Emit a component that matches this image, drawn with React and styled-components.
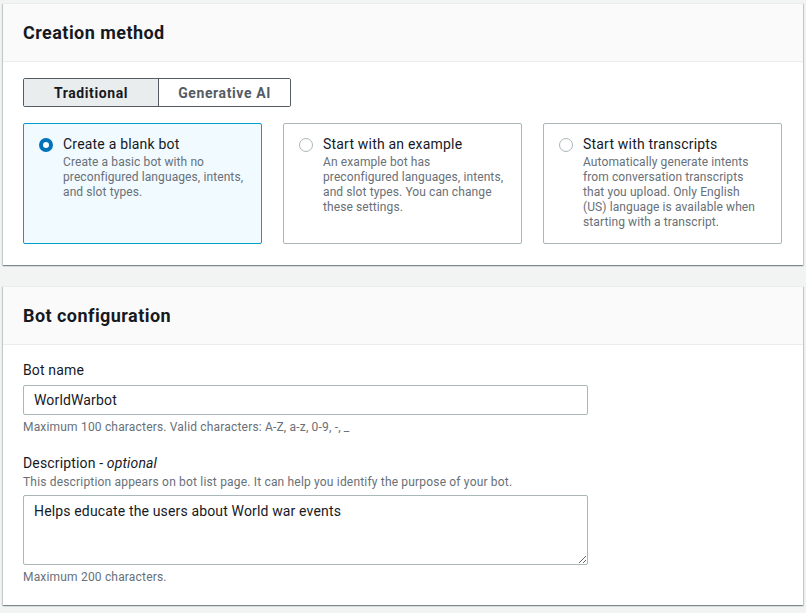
import React, { useState } from "react";
import styled, { createGlobalStyle } from "styled-components";

const GlobalStyle = createGlobalStyle`
  * { box-sizing: border-box; }
  body {
    margin: 0;
    background: #f2f3f3;
    font-family: Roboto, "Liberation Sans", sans-serif;
    color: #16191f;
  }
`;

const Page = styled.div`
  padding: 3px 3px 8px 3px;
  display: flex;
  flex-direction: column;
  gap: 21px;
`;

const Card = styled.section`
  background: #ffffff;
  border-top: 1px solid #eaeded;
  box-shadow: 0 1px 1px 0 rgba(0, 28, 36, 0.3), 1px 1px 1px 0 rgba(0, 28, 36, 0.15),
    -1px 1px 1px 0 rgba(0, 28, 36, 0.15);
`;

const CardHeader = styled.header`
  height: 58px;
  display: flex;
  align-items: center;
  padding: 0 20px;
  background: #fafafa;
  border-bottom: 1px solid #eaeded;
  h2 {
    margin: 0;
    font-size: 18px;
    font-weight: 700;
    line-height: 22px;
    letter-spacing: 0.45px;
  }
`;

const CardBody = styled.div`
  padding: ${(p) => p.$pad || "16px 20px 21px"};
`;

const Segmented = styled.div`
  display: inline-flex;
  border: 1px solid #545b64;
  border-radius: 2px;
  overflow: hidden;
`;

const Segment = styled.button`
  width: ${(p) => p.$w}px;
  height: 27px;
  border: none;
  border-left: ${(p) => (p.$first ? "none" : "1px solid #545b64")};
  background: ${(p) => (p.$active ? "#eaeded" : "#ffffff")};
  color: ${(p) => (p.$active ? "#16191f" : "#545b64")};
  font-family: inherit;
  font-size: 14px;
  font-weight: 700;
  letter-spacing: 0.6px;
  cursor: pointer;
  padding: 0;
`;

const Tiles = styled.div`
  margin-top: 16px;
  display: grid;
  grid-template-columns: repeat(3, 239px);
  gap: 21px;
`;

const Tile = styled.label`
  height: 121px;
  display: flex;
  gap: 10px;
  padding: 10px 15px;
  border: 1px solid ${(p) => (p.$selected ? "#00a1c9" : "#aab7b8")};
  background: ${(p) => (p.$selected ? "#f1faff" : "#ffffff")};
  border-radius: 2px;
  cursor: pointer;
`;

const Radio = styled.span`
  flex: none;
  width: 14px;
  height: 14px;
  margin-top: 4px;
  border-radius: 50%;
  border: ${(p) => (p.$checked ? "4px solid #0073bb" : "1px solid #aab7b8")};
  background: #ffffff;
`;

const TileText = styled.div`
  display: flex;
  flex-direction: column;
`;

const TileTitle = styled.span`
  font-size: 14px;
  line-height: 21px;
  letter-spacing: 0.2px;
  color: #16191f;
`;

const TileDesc = styled.span`
  font-size: 12px;
  line-height: 15px;
  letter-spacing: 0.1px;
  color: #687078;
`;

const Field = styled.div`
  display: flex;
  flex-direction: column;
  & + & {
    margin-top: 17px;
  }
`;

const Label = styled.label`
  font-size: 14px;
  line-height: 22px;
  letter-spacing: 0.15px;
  color: #16191f;
  i {
    font-style: italic;
  }
`;

const Hint = styled.div`
  font-size: 12px;
  line-height: 16px;
  letter-spacing: 0.18px;
  color: #687078;
  margin-top: ${(p) => p.$mt || 0}px;
  margin-bottom: ${(p) => p.$mb || 0}px;
`;

const inputCss = `
  width: 565px;
  border: 1px solid #aab7b8;
  border-radius: 2px;
  padding: 4px 10px;
  font-family: inherit;
  font-size: 14px;
  line-height: 20px;
  letter-spacing: 0.15px;
  color: #16191f;
  background: #ffffff;
  outline: none;
`;

const Input = styled.input`
  ${inputCss}
  height: 30px;
  margin-top: 4px;
`;

const TextArea = styled.textarea`
  ${inputCss}
  height: 70px;
  padding-top: 5px;
  resize: vertical;
  display: block;
`;

const methods = [
  {
    id: "blank",
    title: "Create a blank bot",
    desc: "Create a basic bot with no preconfigured languages, intents, and slot types.",
  },
  {
    id: "example",
    title: "Start with an example",
    desc: "An example bot has preconfigured languages, intents, and slot types. You can change these settings.",
  },
  {
    id: "transcripts",
    title: "Start with transcripts",
    desc: "Automatically generate intents from conversation transcripts that you upload. Only English (US) language is available when starting with a transcript.",
  },
];

export default function App() {
  const [tab, setTab] = useState("traditional");
  const [method, setMethod] = useState("blank");
  const [name, setName] = useState("WorldWarbot");
  const [desc, setDesc] = useState("Helps educate the users about World war events");

  return (
    <>
      <GlobalStyle />
      <Page>
        <Card>
          <CardHeader>
            <h2>Creation method</h2>
          </CardHeader>
          <CardBody>
            <Segmented>
              <Segment
                $first
                $w={134}
                $active={tab === "traditional"}
                onClick={() => setTab("traditional")}
              >
                Traditional
              </Segment>
              <Segment
                $w={132}
                $active={tab === "generative"}
                onClick={() => setTab("generative")}
              >
                Generative AI
              </Segment>
            </Segmented>
            <Tiles>
              {methods.map((m) => (
                <Tile
                  key={m.id}
                  $selected={method === m.id}
                  onClick={() => setMethod(m.id)}
                >
                  <Radio $checked={method === m.id} />
                  <TileText>
                    <TileTitle>{m.title}</TileTitle>
                    <TileDesc>{m.desc}</TileDesc>
                  </TileText>
                </Tile>
              ))}
            </Tiles>
          </CardBody>
        </Card>

        <Card>
          <CardHeader>
            <h2>Bot configuration</h2>
          </CardHeader>
          <CardBody $pad="14px 20px 20px">
            <Field>
              <Label>Bot name</Label>
              <Input value={name} onChange={(e) => setName(e.target.value)} />
              <Hint $mt={4}>
                Maximum 100 characters. Valid characters: A-Z, a-z, 0-9, -, _
              </Hint>
            </Field>
            <Field>
              <Label>
                Description - <i>optional</i>
              </Label>
              <Hint $mb={5}>
                This description appears on bot list page. It can help you identify the
                purpose of your bot.
              </Hint>
              <TextArea value={desc} onChange={(e) => setDesc(e.target.value)} />
              <Hint $mt={4}>Maximum 200 characters.</Hint>
            </Field>
          </CardBody>
        </Card>
      </Page>
    </>
  );
}
